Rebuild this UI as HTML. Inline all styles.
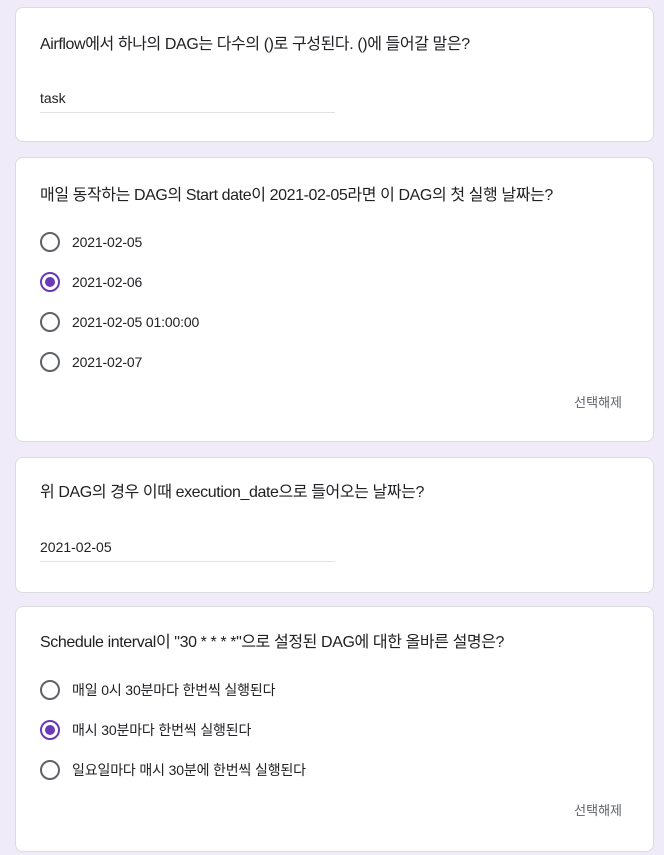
<!DOCTYPE html>
<html><head><meta charset="utf-8"><style>
body{margin:0;background:#f0ebf8;width:664px;height:855px;overflow:hidden;font-family:"Liberation Sans","Noto Sans CJK KR",sans-serif;color:#202124;}
.card{position:absolute;left:15px;width:639px;background:#fff;border:1px solid #dadce0;border-radius:8px;box-sizing:border-box;}
.q{position:absolute;left:24px;font-size:16px;line-height:20px;letter-spacing:-0.4px;white-space:nowrap;}
.inp{position:absolute;left:24px;width:295px;font-size:14px;border-bottom:1px solid #e0e0e0;padding-bottom:6px;}
.opt{position:absolute;left:24px;font-size:14px;height:20px;line-height:20px;}
.r{position:absolute;left:0;top:0;width:16px;height:16px;border:2px solid #5f6368;border-radius:50%;}
.r.on{border-color:#673ab7;}
.r.on::after{content:"";position:absolute;left:3px;top:3px;width:10px;height:10px;border-radius:50%;background:#673ab7;}
.opt span{position:absolute;left:32px;white-space:nowrap;letter-spacing:-0.15px;}
.clr{position:absolute;right:31px;font-size:13px;color:#5f6368;}
</style></head><body>
<div class="card" style="top:7px;height:135px">
<div class="q" style="top:27px">Airflow에서 하나의 DAG는 다수의 ()로 구성된다. ()에 들어갈 말은?</div>
<div class="inp" style="top:82px">task</div>
</div>
<div class="card" style="top:157px;height:285px">
<div class="q" style="top:28px">매일 동작하는 DAG의 Start date이 2021-02-05라면 이 DAG의 첫 실행 날짜는?</div>
<div class="opt" style="top:74px"><div class="r"></div><span>2021-02-05</span></div>
<div class="opt" style="top:114px"><div class="r on"></div><span>2021-02-06</span></div>
<div class="opt" style="top:154px"><div class="r"></div><span>2021-02-05 01:00:00</span></div>
<div class="opt" style="top:194px"><div class="r"></div><span>2021-02-07</span></div>
<div class="clr" style="top:234px">선택해제</div>
</div>
<div class="card" style="top:457px;height:136px">
<div class="q" style="top:25px">위 DAG의 경우 이때 execution_date으로 들어오는 날짜는?</div>
<div class="inp" style="top:81px">2021-02-05</div>
</div>
<div class="card" style="top:606px;height:246px">
<div class="q" style="top:26px">Schedule interval이 "30 * * * *"으로 설정된 DAG에 대한 올바른 설명은?</div>
<div class="opt" style="top:73px"><div class="r"></div><span>매일 0시 30분마다 한번씩 실행된다</span></div>
<div class="opt" style="top:113px"><div class="r on"></div><span>매시 30분마다 한번씩 실행된다</span></div>
<div class="opt" style="top:153px"><div class="r"></div><span>일요일마다 매시 30분에 한번씩 실행된다</span></div>
<div class="clr" style="top:193px">선택해제</div>
</div>
</body></html>
